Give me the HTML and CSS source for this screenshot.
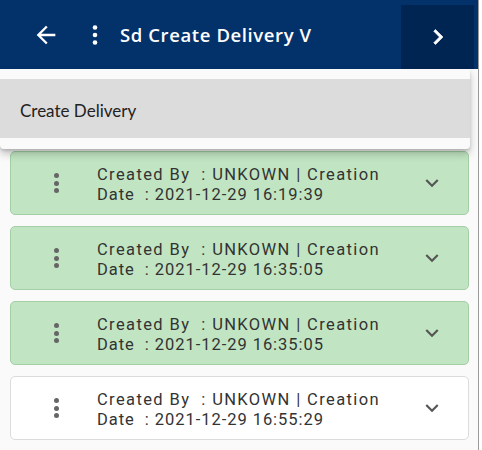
FILE: index.html
```html
<!DOCTYPE html>
<html>
<head>
<meta charset="utf-8">
<link rel="stylesheet" href="styles.css">
</head>
<body>
<div class="app">
  <header class="topbar">
    <button class="icon-btn back" aria-label="Back">
      <svg width="28" height="28" viewBox="0 0 24 24"><path d="M20 11H7.83l5.59-5.59L12 4l-8 8 8 8 1.41-1.41L7.83 13H20v-2z" fill="#fff"/></svg>
    </button>
    <button class="icon-btn kebab" aria-label="More">
      <svg width="24" height="24" viewBox="0 0 24 24"><circle cx="12" cy="4.5" r="2.3" fill="#fff"/><circle cx="12" cy="12" r="2.3" fill="#fff"/><circle cx="12" cy="19.5" r="2.3" fill="#fff"/></svg>
    </button>
    <h1 class="title">Sd Create Delivery V</h1>
    <button class="next" aria-label="Next">
      <svg width="30" height="30" viewBox="0 0 24 24"><path d="M8.59 16.59L13.17 12 8.59 7.41 10 6l6 6-6 6-1.41-1.41z" fill="#fff" stroke="#fff" stroke-width="0.5"/></svg>
    </button>
  </header>

  <div class="menu">
    <div class="menu-item">Create Delivery</div>
  </div>

  <main class="list">
    <div class="card done">
      <span class="dots"><i></i><i></i><i></i></span>
      <div class="text"><span class="line">Created By&nbsp; : UNKOWN | Creation</span><span class="line date">Date&nbsp; : 2021-12-29 16:19:39</span></div>
      <svg class="chev" width="26" height="26" viewBox="0 0 24 24"><path d="M7.41 8.59L12 13.17l4.59-4.58L18 10l-6 6-6-6 1.41-1.41z" fill="#555"/></svg>
    </div>
    <div class="card done">
      <span class="dots"><i></i><i></i><i></i></span>
      <div class="text"><span class="line">Created By&nbsp; : UNKOWN | Creation</span><span class="line date">Date&nbsp; : 2021-12-29 16:35:05</span></div>
      <svg class="chev" width="26" height="26" viewBox="0 0 24 24"><path d="M7.41 8.59L12 13.17l4.59-4.58L18 10l-6 6-6-6 1.41-1.41z" fill="#555"/></svg>
    </div>
    <div class="card done">
      <span class="dots"><i></i><i></i><i></i></span>
      <div class="text"><span class="line">Created By&nbsp; : UNKOWN | Creation</span><span class="line date">Date&nbsp; : 2021-12-29 16:35:05</span></div>
      <svg class="chev" width="26" height="26" viewBox="0 0 24 24"><path d="M7.41 8.59L12 13.17l4.59-4.58L18 10l-6 6-6-6 1.41-1.41z" fill="#555"/></svg>
    </div>
    <div class="card">
      <span class="dots"><i></i><i></i><i></i></span>
      <div class="text"><span class="line">Created By&nbsp; : UNKOWN | Creation</span><span class="line date">Date&nbsp; : 2021-12-29 16:55:29</span></div>
      <svg class="chev" width="26" height="26" viewBox="0 0 24 24"><path d="M7.41 8.59L12 13.17l4.59-4.58L18 10l-6 6-6-6 1.41-1.41z" fill="#555"/></svg>
    </div>
  </main>
</div>
</body>
</html>
```

FILE: styles.css
```css
* { box-sizing: border-box; }
html, body { margin: 0; padding: 0; background: #fff; }
body { width: 482px; height: 450px; overflow: hidden; }

.app {
  position: relative;
  width: 479px;
  height: 450px;
  background: #fafafa;
  border-right: 1px solid #9a9a9a;
  font-family: "Open Sans", sans-serif;
}

.topbar {
  height: 69px;
  background: #03326b;
  display: flex;
  align-items: center;
  padding-left: 32px;
  padding-right: 4px;
}
.icon-btn {
  background: none; border: 0; padding: 0; margin: 0;
  display: flex;
}
.back { width: 28px; height: 28px; }
.kebab { margin-left: 23px; width: 24px; height: 24px; }
.title {
  margin: 0 0 0 13px;
  color: #fff;
  font-family: "Open Sans", sans-serif;
  font-weight: 600;
  font-size: 18.5px;
  letter-spacing: 0.6px;
  flex: 1;
}
.next {
  align-self: stretch;
  margin-top: 5px;
  width: 73px;
  background: #012552;
  border: 0; padding: 0;
  display: flex; align-items: center; justify-content: center;
}

.menu {
  position: absolute;
  left: 0; top: 69px;
  width: 470px;
  height: 80px;
  background: #fafafa;
  border-radius: 0 0 4px 4px;
  padding-top: 10px;
  box-shadow: 0 5px 8px rgba(0,0,0,0.22), 0 2px 3px rgba(0,0,0,0.12);
  z-index: 2;
}
.menu-item {
  height: 59px;
  background: #dcdcdc;
  padding-left: 20px;
  padding-top: 3px;
  display: flex; align-items: center;
  font-family: "Lato", sans-serif;
  font-size: 17px;
  color: #222;
}

.list {
  padding: 82px 9px 0 10px;
  display: flex; flex-direction: column; gap: 11px;
}
.card {
  height: 64px;
  border: 1px solid #dcdcdc;
  border-radius: 5px;
  background: #fff;
  display: flex; align-items: center;
}
.card.done {
  background: #c1e5c2;
  border-color: #a4cfa5;
}
.dots {
  width: 86px;
  display: flex; flex-direction: column; align-items: center; gap: 2.5px;
  padding-left: 5px;
}
.dots i {
  display: block; width: 5px; height: 5px; border-radius: 50%;
  background: #666;
}
.text {
  flex: 1;
  font-family: Roboto, sans-serif;
  font-size: 16.5px;
  line-height: 19.5px;
  letter-spacing: 1.38px;
  color: #333;
  padding-top: 3px;
}
.line { display: block; white-space: nowrap; }
.line.date { letter-spacing: 0.95px; }
.chev { margin-right: 23px; }
```
